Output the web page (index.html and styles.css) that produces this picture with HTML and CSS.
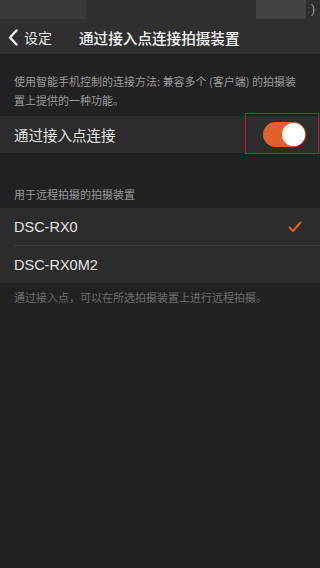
FILE: index.html
```html
<!DOCTYPE html>
<html lang="zh">
<head>
<meta charset="utf-8">
<link rel="stylesheet" href="styles.css">
</head>
<body>
<div class="screen">
  <div class="status">
    <div class="blk-left"></div>
    <div class="blk-mid"></div>
    <div class="blk-right"></div>
    <div class="batt">)</div>
  </div>
  <div class="nav">
    <div class="back">
      <svg width="10" height="17" viewBox="0 0 10 17"><polyline points="8.5,1.5 2,8.5 8.5,15.5" fill="none" stroke="#f2f2f2" stroke-width="2.4" stroke-linecap="round" stroke-linejoin="round"/></svg>
      <span class="back-text">设定</span>
    </div>
    <div class="title">通过接入点连接拍摄装置</div>
  </div>
  <div class="desc">使用智能手机控制的连接方法: 兼容多个 (客户端) 的拍摄装置上提供的一种功能。</div>
  <div class="row toggle-row">
    <span class="label">通过接入点连接</span>
    <div class="toggle"><div class="knob"></div></div>
    <div class="highlight"></div>
  </div>
  <div class="section-head">用于远程拍摄的拍摄装置</div>
  <div class="list">
    <div class="row item">
      <span class="label latin">DSC-RX0</span>
      <svg class="check" width="14" height="12" viewBox="0 0 14 12"><polyline points="1.5,6.5 5,10 12.5,1.5" fill="none" stroke="#e0622a" stroke-width="2" stroke-linecap="round" stroke-linejoin="round"/></svg>
    </div>
    <div class="sep"></div>
    <div class="row item">
      <span class="label latin">DSC-RX0M2</span>
    </div>
  </div>
  <div class="foot">通过接入点，可以在所选拍摄装置上进行远程拍摄。</div>
</div>
</body>
</html>
```
FILE: styles.css
```css
html, body {
  margin: 0;
  padding: 0;
  background: #212121;
}
body {
  font-family: "Noto Sans CJK SC", "Liberation Sans", sans-serif;
  color: #e6e6e6;
}
.screen {
  width: 320px;
  height: 568px;
  background: #212121;
  overflow: hidden;
}
.status {
  height: 20px;
  background: #2f2f2f;
  display: flex;
  align-items: stretch;
  position: relative;
}
.blk-left {
  width: 86px;
  height: 19px;
  background: #3a3a3a;
}
.blk-mid {
  flex: 1;
}
.blk-right {
  width: 50px;
  height: 19px;
  background: #414141;
  margin-right: 14px;
}
.batt {
  position: absolute;
  right: 5px;
  top: 2px;
  font-family: "Liberation Sans", sans-serif;
  font-size: 12px;
  color: #9a9a9a;
}
.nav {
  height: 34px;
  background: #2f2f2f;
  display: flex;
  align-items: center;
  padding-left: 8px;
}
.back {
  display: flex;
  align-items: center;
  gap: 6px;
  width: 71px;
}
.back svg {
  display: block;
}
.back-text {
  font-size: 14px;
  color: #e8e8e8;
}
.title {
  font-size: 14.6px;
  font-weight: 500;
  color: #f4f4f4;
}
.desc {
  margin-top: 18px;
  padding: 0 14px 0 14px;
  font-size: 11px;
  line-height: 19px;
  color: #9a9a9a;
}
.row {
  display: flex;
  align-items: center;
  padding-left: 14px;
  background: #2c2c2c;
}
.toggle-row {
  position: relative;
  margin-top: 6px;
  height: 37px;
  justify-content: space-between;
  padding-right: 14px;
}
.label {
  font-size: 14.5px;
  color: #e4e4e4;
}
.latin {
  font-family: "Liberation Sans", sans-serif;
  font-size: 14.5px;
}
.toggle {
  width: 43px;
  height: 25px;
  border-radius: 13px;
  background: #e0622a;
  display: flex;
  align-items: center;
  justify-content: flex-end;
  padding-right: 1px;
  box-sizing: border-box;
}
.knob {
  width: 23px;
  height: 23px;
  border-radius: 50%;
  background: #ffffff;
}
.highlight {
  position: absolute;
  left: 245px;
  top: -3px;
  width: 74px;
  height: 41px;
  border: 1px solid #c8142c;
  box-sizing: border-box;
}
.section-head {
  margin-top: 33px;
  padding-left: 14px;
  font-size: 11px;
  line-height: 16px;
  color: #9a9a9a;
  margin-bottom: 6px;
}
.list {
  background: #2c2c2c;
}
.item {
  height: 37px;
  justify-content: space-between;
  padding-right: 18px;
}
.check {
  display: block;
}
.sep {
  height: 1px;
  margin-left: 14px;
  background: #3a3a3a;
}
.foot {
  margin-top: 6px;
  padding-left: 14px;
  font-size: 11px;
  line-height: 16px;
  color: #6e6e6e;
}
```
